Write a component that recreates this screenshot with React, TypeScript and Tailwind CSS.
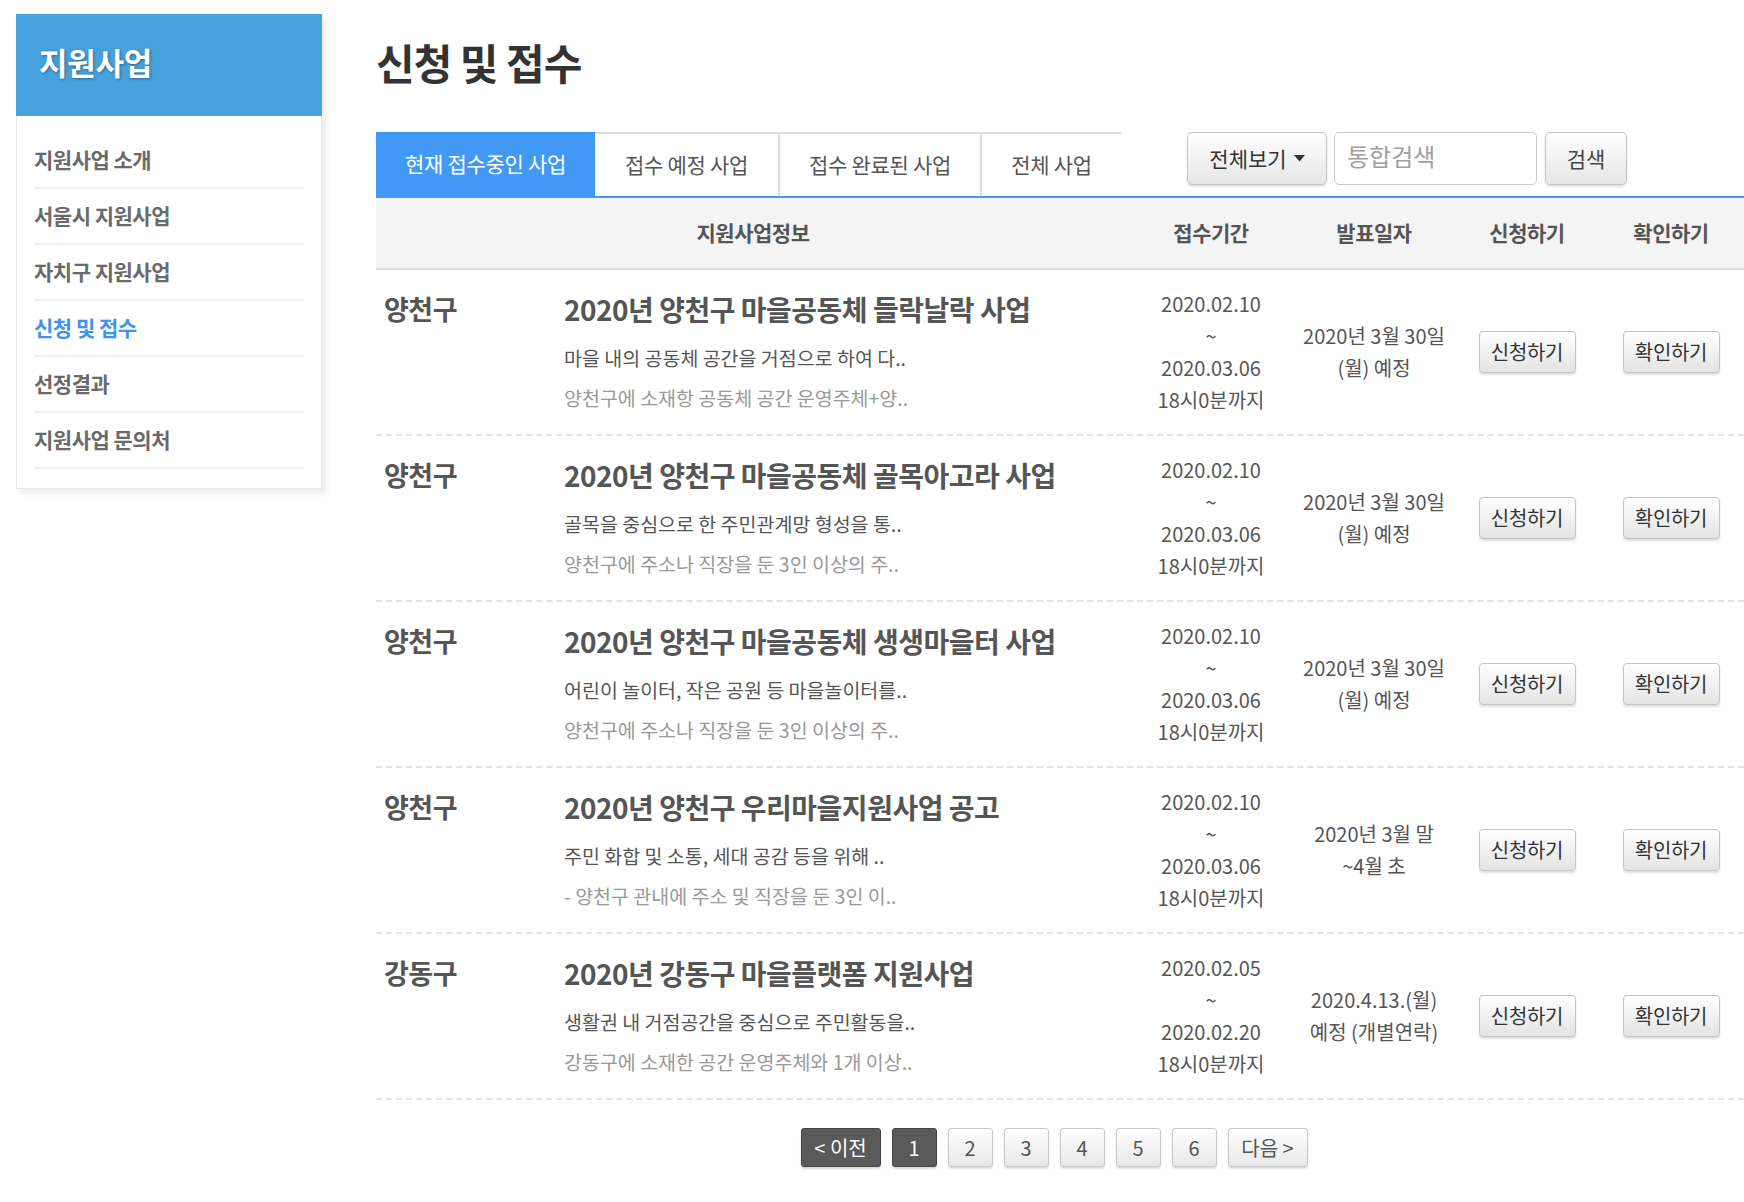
import React from "react";

type Row = {
  region: string;
  title: string;
  desc: string;
  sub: string;
  start: string;
  end: string;
  ann: [string, string];
};

const rows: Row[] = [
  {
    region: "양천구",
    title: "2020년 양천구 마을공동체 들락날락 사업",
    desc: "마을 내의 공동체 공간을 거점으로 하여 다..",
    sub: "양천구에 소재항 공동체 공간 운영주체+양..",
    start: "2020.02.10",
    end: "2020.03.06",
    ann: ["2020년 3월 30일", "(월) 예정"],
  },
  {
    region: "양천구",
    title: "2020년 양천구 마을공동체 골목아고라 사업",
    desc: "골목을 중심으로 한 주민관계망 형성을 통..",
    sub: "양천구에 주소나 직장을 둔 3인 이상의 주..",
    start: "2020.02.10",
    end: "2020.03.06",
    ann: ["2020년 3월 30일", "(월) 예정"],
  },
  {
    region: "양천구",
    title: "2020년 양천구 마을공동체 생생마을터 사업",
    desc: "어린이 놀이터, 작은 공원 등 마을놀이터를..",
    sub: "양천구에 주소나 직장을 둔 3인 이상의 주..",
    start: "2020.02.10",
    end: "2020.03.06",
    ann: ["2020년 3월 30일", "(월) 예정"],
  },
  {
    region: "양천구",
    title: "2020년 양천구 우리마을지원사업 공고",
    desc: "주민 화합 및 소통, 세대 공감 등을 위해 ..",
    sub: "- 양천구 관내에 주소 및 직장을 둔 3인 이..",
    start: "2020.02.10",
    end: "2020.03.06",
    ann: ["2020년 3월 말", "~4월 초"],
  },
  {
    region: "강동구",
    title: "2020년 강동구 마을플랫폼 지원사업",
    desc: "생활권 내 거점공간을 중심으로 주민활동을..",
    sub: "강동구에 소재한 공간 운영주체와 1개 이상..",
    start: "2020.02.05",
    end: "2020.02.20",
    ann: ["2020.4.13.(월)", "예정 (개별연락)"],
  },
];

const menu = [
  "지원사업 소개",
  "서울시 지원사업",
  "자치구 지원사업",
  "신청 및 접수",
  "선정결과",
  "지원사업 문의처",
];

function GrayButton({ label }: { label: string }) {
  return (
    <button className="w-[97px] h-[42px] rounded-[4px] border border-[#c4c4c4] bg-linear-to-b from-white to-[#e4e4e4] shadow-[0_2px_2px_rgba(0,0,0,0.13)] text-[20px] text-[#333] leading-none tracking-[-0.3px]">
      {label}
    </button>
  );
}

export default function App() {
  return (
    <div className="w-[1744px] h-[1202px] overflow-hidden bg-white flex items-start pl-[16px] pt-[14px] font-['Noto_Sans_CJK_KR','Noto_Sans',sans-serif]">
      {/* Sidebar */}
      <aside className="w-[306px] shrink-0 bg-white shadow-[5px_5px_5px_rgba(0,0,0,0.07)]">
        <div className="h-[102px] bg-[#47a1dc] flex items-center pl-[23px] pb-[5px]">
          <span className="text-[31px] font-bold text-white tracking-[-0.3px] [text-shadow:1px_1px_3px_rgba(0,0,0,0.35)]">
            지원사업
          </span>
        </div>
        <ul className="border-x border-b border-[#e8e8e8] pt-[17px] pb-[19px] px-[17px]">
          {menu.map((m) => (
            <li
              key={m}
              className={`h-[56px] border-b-2 border-[#eeeeee] flex items-center text-[21px] font-bold tracking-[-0.5px] ${
                m === "신청 및 접수" ? "text-[#3d93ee]" : "text-[#6a6a6a]"
              }`}
            >
              {m}
            </li>
          ))}
        </ul>
      </aside>

      {/* Main */}
      <main className="ml-[54px] flex-1 min-w-0">
        <h1 className="mt-[27px] h-[42px] leading-[42px] text-[42px] font-bold text-[#333] tracking-[-1px]">
          신청 및 접수
        </h1>

        {/* Tabs + controls */}
        <div className="mt-[49px] flex items-start h-[64px]">
          <div className="flex h-[64px]">
            <div className="w-[219px] h-[64px] bg-[#4299f5] flex items-center justify-center text-[21px] text-white tracking-[-0.3px]">
              현재 접수중인 사업
            </div>
            <div className="w-[185px] h-[64px] border-t-2 border-r-2 border-[#dddddd] flex items-center justify-center text-[21px] text-[#555] tracking-[-0.3px]">
              접수 예정 사업
            </div>
            <div className="w-[202px] h-[64px] border-t-2 border-r-2 border-[#dddddd] flex items-center justify-center text-[21px] text-[#555] tracking-[-0.3px]">
              접수 완료된 사업
            </div>
            <div className="w-[139px] h-[64px] border-t-2 border-[#dddddd] flex items-center justify-center text-[21px] text-[#555] tracking-[-0.3px]">
              전체 사업
            </div>
          </div>
          <div className="ml-[66px] flex items-center">
            <button className="w-[140px] h-[53px] rounded-[5px] border border-[#c4c4c4] bg-linear-to-b from-white to-[#e6e6e6] shadow-[0_2px_2px_rgba(0,0,0,0.12)] flex items-center justify-center gap-[7px] text-[21px] text-[#333]">
              <span>전체보기</span>
              <svg width="11" height="7" viewBox="0 0 11 7">
                <path d="M0 0 L11 0 L5.5 6.5 Z" fill="#333" />
              </svg>
            </button>
            <input
              className="ml-[7px] w-[203px] h-[53px] rounded-[5px] border border-[#cccccc] bg-white pl-[12px] pb-[6px] text-[24px] text-[#333] placeholder:text-[#a0a0a0] outline-none"
              placeholder="통합검색"
            />
            <button className="ml-[8px] w-[82px] h-[53px] rounded-[5px] border border-[#c4c4c4] bg-linear-to-b from-white to-[#e6e6e6] shadow-[0_2px_2px_rgba(0,0,0,0.12)] text-[21px] text-[#444]">
              검색
            </button>
          </div>
        </div>
        <div className="h-[2px] bg-[#4299f5]" />

        {/* Table header */}
        <div className="grid grid-cols-[754px_162px_164px_142px_146px] h-[72px] bg-[#f4f4f4] border-b-2 border-[#dddddd] items-center text-[21px] font-bold text-[#555] text-center tracking-[-0.5px]">
          <div>지원사업정보</div>
          <div>접수기간</div>
          <div>발표일자</div>
          <div>신청하기</div>
          <div>확인하기</div>
        </div>

        {/* Rows */}
        {rows.map((r, i) => (
          <div
            key={i}
            className="grid grid-cols-[754px_162px_164px_142px_146px] h-[166px] border-b-2 border-dashed border-[#e2e2e2] items-center"
          >
            <div className="self-stretch flex pt-[22px]">
              <div className="w-[188px] shrink-0 pl-[8px] text-[27px] leading-[34px] font-bold text-[#555] tracking-[-0.5px]">
                {r.region}
              </div>
              <div>
                <div className="text-[28px] leading-[34px] font-bold text-[#555] tracking-[-0.5px]">
                  {r.title}
                </div>
                <div className="mt-[18px] text-[19.5px] leading-[28px] text-[#555]">
                  {r.desc}
                </div>
                <div className="mt-[12px] text-[19.5px] leading-[28px] text-[#999]">
                  {r.sub}
                </div>
              </div>
            </div>
            <div className="text-center text-[20px] leading-[32px] text-[#555]">
              <div>{r.start}</div>
              <div>~</div>
              <div>{r.end}</div>
              <div>18시0분까지</div>
            </div>
            <div className="text-center text-[20px] leading-[32px] text-[#555]">
              <div>{r.ann[0]}</div>
              <div>{r.ann[1]}</div>
            </div>
            <div className="flex justify-center">
              <GrayButton label="신청하기" />
            </div>
            <div className="flex justify-center">
              <GrayButton label="확인하기" />
            </div>
          </div>
        ))}

        {/* Pagination */}
        <div className="mt-[28px] flex justify-center gap-[11px] pr-[12px]">
          <button className="w-[80px] h-[39px] rounded-[3px] border border-[#444] bg-[#5a5a5a] text-white text-[20px] shadow-[0_2px_2px_rgba(0,0,0,0.15)]">
            &lt; 이전
          </button>
          {[1, 2, 3, 4, 5, 6].map((n) => (
            <button
              key={n}
              className={
                n === 1
                  ? "w-[45px] h-[39px] rounded-[3px] border border-[#444] bg-[#5a5a5a] text-white text-[20px] shadow-[0_2px_2px_rgba(0,0,0,0.15)]"
                  : "w-[45px] h-[39px] rounded-[3px] border border-[#c8c8c8] bg-linear-to-b from-white to-[#e8e8e8] text-[#555] text-[20px] shadow-[0_2px_2px_rgba(0,0,0,0.13)]"
              }
            >
              {n}
            </button>
          ))}
          <button className="w-[80px] h-[39px] rounded-[3px] border border-[#c8c8c8] bg-linear-to-b from-white to-[#e8e8e8] text-[#555] text-[20px] shadow-[0_2px_2px_rgba(0,0,0,0.13)]">
            다음 &gt;
          </button>
        </div>
      </main>
    </div>
  );
}
